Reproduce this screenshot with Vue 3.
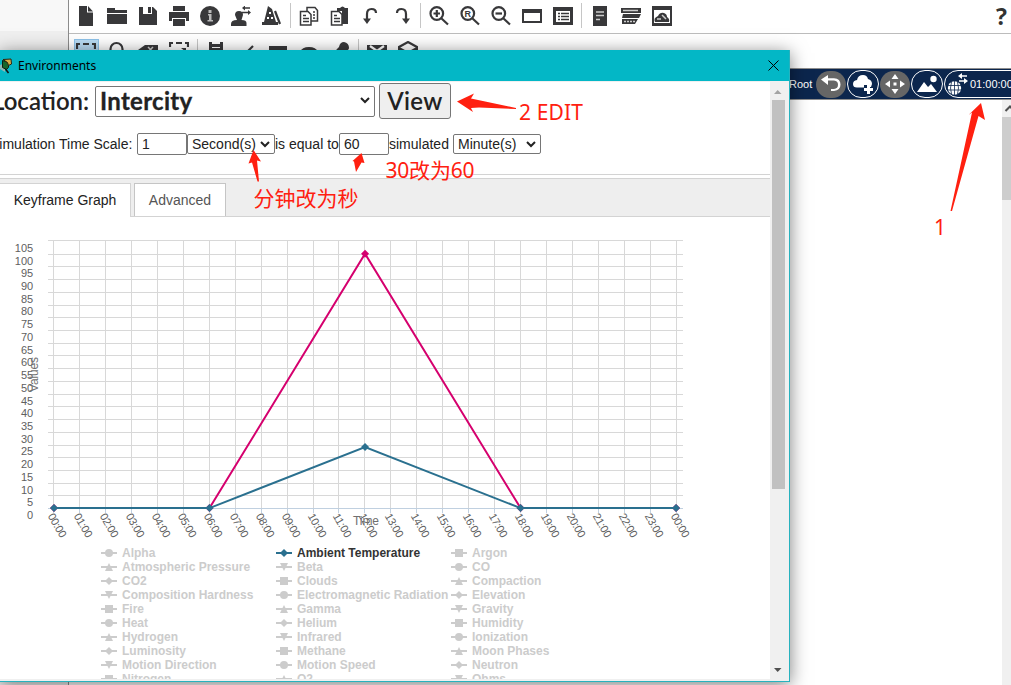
<template>
  <div class="screen">
    <div class="backdrop">
      <div class="gutter"></div>
      <div class="app">
        <div
          v-for="(bar, b) in toolbars"
          :key="'bar-' + b"
          class="toolbar"
          :class="{ second: b === 1 }"
        >
          <template v-for="(name, i) in bar" :key="i">
            <span v-if="name === '|'" class="sep"></span>
            <span v-else class="tool" :class="{ picked: name === 'select' }">
              <svg width="20" height="20" viewBox="0 0 20 20">
                <path
                  v-for="(shape, s) in icons[name]"
                  :key="s"
                  :class="shape[0]"
                  :d="shape[1]"
                />
                <text v-if="name === 'reset'" class="letter" x="4.600" y="10.700">R</text>
              </svg>
            </span>
          </template>
          <span v-if="b === 0" class="help">?</span>
        </div>

        <div class="navbar">
          <span class="root">Root</span>
          <span class="round gray">
            <svg width="30" height="28" viewBox="0 0 30 28">
              <path class="wfill" d="M5 9.500L12 5v3.200h6q6.500 .5 6.500 6.300t-6.500 6.500h-3v-2h3q4-.5 4-4.300t-4-4.200h-6V15z" />
            </svg>
          </span>
          <span class="round">
            <svg width="30" height="28" viewBox="0 0 30 28">
              <path class="wfill" d="M9 17.500q-4 0-4-3.500t4-4q1-5 6-5 4 0 5 4 4 1 4 5l-1 3h-4v-2h-3v2.500z" />
              <path class="wline" d="M20.500 15v9M16 19.500h9" />
            </svg>
          </span>
          <span class="round gray">
            <svg width="30" height="28" viewBox="0 0 30 28">
              <path class="wfill" d="M15 4l3.500 5h-7zM15 24l3.500-5h-7zM5 14l5-3.500v7zM25 14l-5-3.500v7zM13.500 12.500h3v3h-3z" />
            </svg>
          </span>
          <span class="round">
            <svg width="30" height="28" viewBox="0 0 30 28">
              <path class="wfill" d="M5 22l7-10 4 5 3-3 6 8z" />
              <circle class="wfill" cx="21.500" cy="9" r="3.200" />
            </svg>
          </span>
          <span class="round time">
            <svg width="25" height="28" viewBox="0 0 25 28">
              <circle class="wfill" cx="9.500" cy="18" r="6.700" />
              <path class="globe" d="M3 15.500h13M3 20h13M9.500 11v14M6.500 12q-2 6 0 12M12.500 12q2 6 0 12" />
              <path class="arrows" d="M15 6h7M14 11h7" />
              <path class="wfill" d="M13 6l4-3v6zM23 11l-4-3v6z" />
            </svg>
            <span>01:00:00</span>
          </span>
        </div>

        <div class="canvas">
          <div class="side-scroll">
            <svg width="9" height="17" viewBox="0 0 9 17">
              <path d="M3.500 11L8 6.500l4 4" />
            </svg>
            <div class="side-thumb"></div>
          </div>
        </div>
      </div>
    </div>

    <div class="window">
      <div class="titlebar">
        <svg class="logo" width="14" height="18" viewBox="0 0 14 18">
          <path fill="#8fb8b4" d="M0 8l5-2v9l-5-3z" />
          <path fill="#17672b" stroke="#10200f" d="M2.500 3.500l6 2v5l-2 2-4-2z" />
          <path fill="#d9ae45" stroke="#2b2410" d="M3 2.500l8-.5.500 5-3 1.500-1-3z" />
          <path stroke="#111" stroke-width="1.500" d="M5.500 12l3 4" />
        </svg>
        <span class="title">Environments</span>
        <svg class="close" width="11" height="11" viewBox="0 0 11 11">
          <path d="M.5.5l10 10M10.500.5l-10 10" />
        </svg>
      </div>

      <div class="body">
        <div class="page">
          <div class="location">
            <span class="caption">Location:</span>
            <span class="place">
              <b>Intercity</b>
              <svg class="chevron" width="10" height="7" viewBox="0 0 10 7"><path d="M1 1l4 4 4-4" /></svg>
            </span>
            <span class="view"><span>View</span></span>
          </div>

          <div class="scale">
            <span class="scale-label">Simulation Time Scale:</span>
            <span class="field">1</span>
            <span class="unit">
              <span>Second(s)</span>
              <svg class="chevron" width="10" height="7" viewBox="0 0 10 7"><path d="M1 1l4 4 4-4" /></svg>
            </span>
            <span class="equal">is equal to</span>
            <span class="field">60</span>
            <span class="simulated">simulated</span>
            <span class="unit">
              <span>Minute(s)</span>
              <svg class="chevron" width="10" height="7" viewBox="0 0 10 7"><path d="M1 1l4 4 4-4" /></svg>
            </span>
          </div>

          <div class="tabs">
            <span class="tab active">Keyframe Graph</span>
            <span class="tab">Advanced</span>
          </div>

          <svg class="chart" width="770" height="328" viewBox="0 217 770 328">
            <path v-for="t in rows" :key="'h' + t.y" class="grid" :d="`M48 ${t.y}H683`" />
            <path v-for="(h, i) in hours" :key="'v' + i" class="grid" :d="`M${h.x} 240V508`" />
            <path v-for="(h, i) in hours" :key="'t' + i" class="axis" :d="`M${h.x} 508V513`" />
            <path class="axis" d="M48 508.500H683" />
            <text
              v-for="t in rows"
              :key="'y' + t.value"
              class="tick"
              x="33.200"
              :y="t.label"
              text-anchor="end"
            >{{ t.value }}</text>
            <text
              v-for="(h, i) in hours"
              :key="'x' + i"
              class="tick"
              textLength="26"
              :transform="`translate(${h.x - 6} 516) rotate(60)`"
            >{{ h.text }}</text>
            <text class="axis-title" transform="translate(38 392) rotate(-90)" textLength="35">Values</text>
            <text class="axis-title" x="353" y="525" textLength="26">Time</text>
            <g v-for="s in series" :key="s.color" :fill="s.color" :stroke="s.color">
              <polyline class="curve" :points="linePoints(s)" />
              <path
                v-for="p in s.points"
                :key="p[0]"
                stroke="none"
                :d="diamond(pointX(p[0]), valueY(p[1]))"
              />
            </g>
          </svg>

          <div class="legend">
            <div
              v-for="(name, i) in legend"
              :key="name"
              class="entry"
              :class="{ on: name === 'Ambient Temperature' }"
            >
              <svg width="16" height="10" viewBox="0 0 16 10">
                <path d="M0 4h16v2H0z" />
                <path :d="markers[i % 5]" />
              </svg>
              <span>{{ name }}</span>
            </div>
          </div>
        </div>

        <div class="scrollbar">
          <svg width="18" height="18" viewBox="0 0 18 18"><path fill="#a3a3a3" d="M4 12h7.500L7.700 8z" /></svg>
          <div class="thumb"></div>
          <svg width="18" height="18" viewBox="0 0 18 18"><path fill="#505050" d="M4 7h7.500L7.700 11z" /></svg>
        </div>
      </div>
    </div>

    <svg class="notes" width="1011" height="685" viewBox="0 0 1011 685">
      <path d="M457 101.500l17-8-3 5 45 9.500v1l-37-1.500-8 .5 2 4z" />
      <path d="M253.500 150l7.500 11.500-4-1 2 21h-1.500l-5.500-19-3.500 1z" />
      <path d="M361.500 153l3 10-3-.5-5.500 9.500-2-10.500-1.500-.5z" />
      <path d="M981 103l4 17-6.500-4-26.500 95h-1.500l21.500-98.500-3.500 2.500z" />
      <text x="519" y="119.500" textLength="64">2 EDIT</text>
      <text x="385.500" y="177.500" textLength="89">30改为60</text>
      <text x="253.500" y="205.500" textLength="105">分钟改为秒</text>
      <text x="934" y="235">1</text>
    </svg>
  </div>
</template>

<script setup>
// Toolbar contents, "|" is a separator
const toolbars = [
  [
    "file", "folder", "save", "print", "info", "user", "wizard", "|",
    "copy", "paste", "undo", "redo", "|",
    "zoomIn", "reset", "zoomOut", "frame", "list", "|",
    "server", "stack", "cloud",
  ],
  [
    "select", "search", "erase", "resize", "|",
    "note", "pen", "rect", "ellipse", "brush", "|",
    "mail", "openMail",
  ],
];

const glass = "M1.500 7.500a6.300 6.300 0 1 0 12.600 0a6.300 6.300 0 1 0-12.600 0M12.500 12.500l6.500 6";

const icons = {
  file: [["fill", "M3 0h8v6.500h6V20H3z"], ["fill", "M12 0l5 5.500h-5z"]],
  folder: [["fill", "M0 2h8v2h12v3H0zM0 8h20v10H0z"]],
  save: [["fill", "M1 1h14l4 4v14H1z"], ["white", "M5 1h9v7H5z"], ["fill", "M10 1h3v6h-3z"]],
  print: [["fill", "M4 0h12v5H4zM0 6h20v9h-3v-3H3v3H0zM4 13h12v7H4z"]],
  info: [["fill", "M0 10a10 10 0 1 0 20 0a10 10 0 1 0-20 0"], ["pale", "M8.500 4h3v3h-3zM8 8h3.500v6H13v1.500H7.500V14H9V9.500H8z"]],
  user: [
    ["fill", "M4 9q0-4 4-4t4 4l-1.500 5q5 0 5 3v3H0v-2q0-4 6-4z"],
    ["thin", "M12 2h7M11 6.500h7"],
    ["fill", "M11 2L14-.5v5zM20 6.500L17 4v5z"],
  ],
  wizard: [["fill", "M6 0l4 3 4 13h2v3H0v-3h2z"], ["line", "M13 5l5 13"], ["white", "M7 6h2v2H7zM5 11h2v2H5zM9 11h2v2H9z"]],
  copy: [["outline", "M8 1.500h8l2.500 3V15H8z"], ["outline", "M1.500 5.500H9l3 3V19H1.500z"], ["thin", "M4 9.500h3M4 12.500h6M4 15.500h6M14 6h2M14 9h2M14 12h2"]],
  paste: [["fill", "M7 2h3q2.500-3 5 0h3v16h-6V5H7z"], ["outline", "M1.500 5.500H9l3 3V19H1.500z"], ["thin", "M4 9.500h3M4 12.500h6M4 15.500h6"]],
  undo: [["line", "M6 14V8q0-5 4.500-5T15 7"], ["fill", "M2 12.500h8L6 18z"]],
  redo: [["line", "M14 14V8q0-5-4.500-5T5 7"], ["fill", "M10 12.500h8L14 18z"]],
  zoomIn: [["line", glass], ["line", "M4.500 7.500h6.500M7.800 4v7"]],
  reset: [["line", glass]],
  zoomOut: [["line", glass], ["line", "M4.500 7.500h6.500"]],
  frame: [["fill", "M0 3h20v14H0z"], ["white", "M2 7h16v8H2z"]],
  list: [["fill", "M0 1h20v18H0z"], ["white", "M3 5h14v11H3z"], ["thin", "M5 7.500h2M8 7.500h8M5 10.500h2M8 10.500h8M5 13.500h2M8 13.500h8"]],
  server: [["fill", "M3 0h14v20H3z"], ["paleLine", "M6 6h8M6 9.500h8M6 13.500h4"]],
  stack: [["fill", "M0 2h20v5H0zM2 8h18l-2 4H1zM1 13h16l-3 5H1z"], ["paleLine", "M2 4.500h15"], ["paleLine dots", "M3 15.500h11"]],
  cloud: [["fill", "M0 0h20v20H0z"], ["white", "M2 4h16v13H2z"], ["fill", "M3 16q-2-4 3-6 2-4 6-3 3 1 3 4 3 2 2 5z"], ["paleLine", "M5 13h4M10 9l4 4"]],
  select: [["line", "M1 8V3h3M7 3h6M16 3h3v5"]],
  search: [["line", "M3.500 10V8a6 6 0 0 1 12 0v2"]],
  erase: [["fill", "M0 9l7-5h13v7H0z"], ["paleLine", "M10 6l5 5M15 6l-5 5"]],
  resize: [["line", "M1 6V2h3M7 2h6M16 2h3v4"], ["fill", "M12 7h5v4z"]],
  note: [["fill", "M3 1h3v2h8V1h3v12H3z"], ["white", "M6 6h8v1H6z"]],
  pen: [["line", "M16 5l-8 8"]],
  rect: [["fill", "M1 5h18v9H1z"]],
  ellipse: [["fill", "M1 11q2-5 9-5t9 5z"]],
  brush: [["fill", "M9 6q1-5 5-5 5 1 5 6 0 3-6 3l-10 3 4-5z"]],
  mail: [["fill", "M0 4h20v12H0z"], ["whiteLine", "M3 5l7 5 7-5"]],
  openMail: [["line", "M1 12V6l9-5 9 5v6M1 7l9 5 9-5"]],
};

const STEP = 12.72;
const hourX = (hour) => Math.round(53 + hour * 25.95) + 0.5;
const pointX = (hour) => 54 + hour * 25.92;
const valueY = (value) => 508.1 - (value / 5) * STEP;

const rows = Array.from({ length: 22 }, (_, i) => ({
  value: i * 5,
  y: Math.round(valueY(i * 5)) + 0.5 - (i === 21 ? 1 : 0),
  label: Math.round(519 - i * STEP),
}));

const hours = Array.from({ length: 25 }, (_, i) => ({
  x: hourX(i),
  text: String(i % 24).padStart(2, "0") + ":00",
}));

const series = [
  { color: "#d5006e", points: [[0, 0], [6, 0], [12, 100], [18, 0], [24, 0]] },
  { color: "#2a708f", points: [[0, 0], [6, 0], [12, 24], [18, 0], [24, 0]] },
];

const linePoints = (s) => s.points.map((p) => `${pointX(p[0])},${valueY(p[1])}`).join(" ");
const diamond = (x, y) => `M${x} ${y - 4}l4 4-4 4-4-4z`;

// circle, diamond, square, triangle, triangle-down
const markers = [
  "M4 5a4 4 0 1 0 8 0a4 4 0 1 0-8 0",
  "M8 1l4 4-4 4-4-4z",
  "M4 1h8v8H4z",
  "M8 1l4 8H4z",
  "M4 1h8L8 9z",
];

const legend = [
  "Alpha", "Ambient Temperature", "Argon",
  "Atmospheric Pressure", "Beta", "CO",
  "CO2", "Clouds", "Compaction",
  "Composition Hardness", "Electromagnetic Radiation", "Elevation",
  "Fire", "Gamma", "Gravity",
  "Heat", "Helium", "Humidity",
  "Hydrogen", "Infrared", "Ionization",
  "Luminosity", "Methane", "Moon Phases",
  "Motion Direction", "Motion Speed", "Neutron",
  "Nitrogen", "O2", "Ohms",
];
</script>

<style>
body {
  overflow: hidden;
}
</style>

<style scoped>
.screen {
  position: relative;
  width: 1011px;
  height: 685px;
  overflow: hidden;
  background: #fff;
  font-family: "Liberation Sans", Arial, sans-serif;
  color: #222;
}

.screen * {
  box-sizing: border-box;
}

svg {
  display: block;
  flex: none;
}

.backdrop {
  display: flex;
  height: 685px;
}

.gutter {
  width: 69px;
  background: linear-gradient(#f8f8f8 31px, #efefef 31px);
  border-right: 1px solid #8c8c8c;
}

.app {
  flex: 1;
  min-width: 0;
  display: flex;
  flex-direction: column;
}

.toolbar {
  display: flex;
  height: 34px;
  padding: 0 4px 2px 1.5px;
  align-items: center;
  border-bottom: 1px solid #bcbcbc;
}

.toolbar.second {
  border-bottom: none;
  padding-top: 2px;
}

.tool {
  width: 31px;
  height: 25px;
  display: flex;
  align-items: center;
  justify-content: center;
}

.picked {
  width: 25px;
  margin: 0 3px;
  background: #b9dcf5;
  border: 1px solid #8ec3ea;
}

.sep {
  width: 1px;
  height: 25px;
  margin: 0 2.5px;
  background: #c6c6c6;
}

.help {
  margin-left: auto;
  font: bold 23px "Open Sans", sans-serif;
  color: #333;
}

.fill {
  fill: #38383a;
}

.white {
  fill: #fff;
}

.pale {
  fill: #bbb;
}

.line,
.outline,
.thin,
.paleLine,
.whiteLine {
  fill: none;
  stroke: #38383a;
  stroke-width: 2.2;
}

.outline {
  fill: #fff;
  stroke-width: 1.5;
}

.thin {
  stroke-width: 1.5;
}

.paleLine {
  stroke: #ccc;
  stroke-width: 1.5;
}

.dots {
  stroke-dasharray: 2 1;
}

.whiteLine {
  stroke: #fff;
}

.letter {
  font: bold 9px "Liberation Sans", sans-serif;
  fill: #38383a;
}

.navbar {
  display: flex;
  align-items: center;
  gap: 1px;
  height: 32px;
  padding-left: 720px;
  background: #0c264d;
  border-top: 1px solid #8d8d8d;
  border-bottom: 1px solid #8d8d8d;
  color: #fff;
  font-size: 11px;
  overflow: hidden;
}

.root {
  width: 26px;
  flex: none;
}

.round {
  width: 32px;
  height: 28px;
  flex: none;
  display: flex;
  align-items: center;
  justify-content: center;
  border: 1px solid #fff;
  border-radius: 14px;
}

.gray {
  width: 30px;
  height: 27px;
  background: #666;
  border: none;
}

.time {
  width: 90px;
  justify-content: flex-start;
}

.wfill {
  fill: #fff;
}

.wline {
  stroke: #fff;
  stroke-width: 3;
}

.arrows {
  stroke: #fff;
  stroke-width: 1.5;
}

.globe {
  fill: none;
  stroke: #0c264d;
  stroke-width: 0.8;
}

.canvas {
  flex: 1;
  display: flex;
  justify-content: flex-end;
}

.side-scroll {
  width: 9px;
  background: #f0f0f0;
}

.side-scroll path {
  fill: none;
  stroke: #505050;
  stroke-width: 2;
}

.side-thumb {
  height: 83px;
  background: #cdcdcd;
}

.window {
  position: absolute;
  left: -1px;
  top: 50px;
  width: 791px;
  height: 632px;
  display: flex;
  flex-direction: column;
  border: 1px solid #27b2be;
  border-top: none;
  background: #f0f0f0;
  box-shadow: 0 3px 17px rgba(0, 0, 0, 0.5);
}

.titlebar {
  display: flex;
  align-items: center;
  height: 31px;
  padding-right: 10px;
  background: #03b7c6;
}

.title {
  margin-left: 4px;
  font: 12px "Noto Sans", "Open Sans", sans-serif;
  color: #000;
}

.close {
  margin-left: auto;
}

.close path {
  stroke: #000;
}

.body {
  flex: 1;
  min-height: 0;
  display: flex;
  padding: 1px 0 2px;
}

.page {
  width: 770px;
  overflow: hidden;
  background: #fff;
}

.location {
  display: flex;
  align-items: center;
  height: 38px;
  font-family: Lato, sans-serif;
  font-size: 24px;
  line-height: 28px;
}

.caption {
  width: 103px;
  margin-left: -8px;
  font-weight: 600;
  white-space: nowrap;
}

.place {
  width: 280px;
  height: 31px;
  display: flex;
  align-items: center;
  justify-content: space-between;
  padding: 0 4px 1px;
  border: 1px solid #767676;
  border-radius: 2px;
}

.place b {
  letter-spacing: 0.3px;
  -webkit-text-stroke: 0.3px #222;
}

.view {
  width: 72px;
  height: 36px;
  margin-left: 4px;
  padding-bottom: 1px;
  display: flex;
  align-items: center;
  justify-content: center;
  background: #efefef;
  border: 1px solid #767676;
  border-radius: 3px;
  font-weight: 600;
  letter-spacing: 0.3px;
}

.chevron path {
  fill: none;
  stroke: #222;
  stroke-width: 2;
}

.scale {
  display: flex;
  align-items: center;
  height: 48px;
  font-size: 14px;
  white-space: nowrap;
}

.scale-label {
  width: 147px;
  margin-left: -10px;
}

.field {
  width: 50px;
  height: 22px;
  padding-left: 4px;
  line-height: 20px;
  border: 1px solid #767676;
  border-radius: 2px;
}

.unit {
  width: 88px;
  height: 20px;
  display: flex;
  align-items: center;
  justify-content: space-between;
  padding: 0 4px;
  border: 1px solid #767676;
  border-radius: 2px;
}

.equal {
  width: 64px;
}

.simulated {
  width: 64px;
}

.tabs {
  display: flex;
  align-items: flex-end;
  height: 43px;
  margin-top: 6px;
  padding-top: 8px;
  border-top: 1px solid #d3d3d3;
  border-bottom: 1px solid #d3d3d3;
  background: linear-gradient(#fff 3px, #d3d3d3 3px, #d3d3d3 4px, #eee 4px);
  font-size: 14px;
}

.tab {
  width: 92px;
  height: 33px;
  line-height: 33px;
  text-align: center;
  background: #fff;
  border: 1px solid #c5c5c5;
  border-bottom: none;
  color: #555;
}

.active {
  width: 131px;
  height: 34px;
  margin: 0 3px -1px 0;
  border-left: none;
  border-color: #d3d3d3;
  color: #222;
}

.grid {
  stroke: #d8d8d8;
}

.axis {
  stroke: #c0d0e0;
}

.tick {
  font-size: 11px;
  fill: #606060;
}

.axis-title {
  font-size: 12px;
  fill: #707070;
}

.curve {
  fill: none;
  stroke-width: 2;
}

.legend {
  display: grid;
  grid-template-columns: 175px 175px 175px;
  grid-auto-rows: 14px;
  padding: 1px 0 0 101px;
  font-size: 12px;
  font-weight: bold;
  color: #ccc;
}

.entry {
  display: flex;
  align-items: center;
  gap: 5px;
  white-space: nowrap;
  fill: #ccc;
}

.entry.on {
  color: #333;
  fill: #2a708f;
}

.scrollbar {
  width: 19px;
  display: flex;
  flex-direction: column;
}

.thumb {
  width: 13px;
  height: 389px;
  margin: 0 0 auto 2px;
  background: #c1c1c1;
}

.notes {
  position: absolute;
  left: 0;
  top: 0;
  fill: #ff2010;
  font: 21px "Noto Sans", "Noto Sans CJK SC", sans-serif;
}
</style>
